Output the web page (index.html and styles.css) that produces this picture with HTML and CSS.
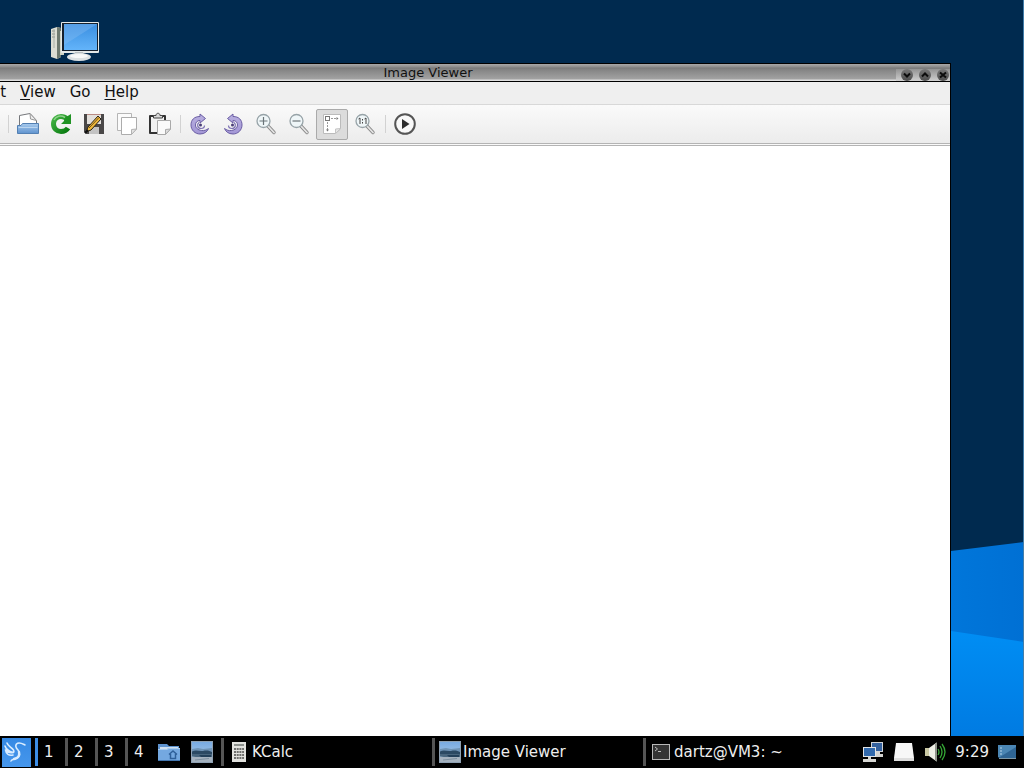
FILE: index.html
```html
<!DOCTYPE html>
<html lang="en">
<head>
    <meta charset="UTF-8">
    <meta name="viewport" content="width=device-width, initial-scale=1.0">
    <title>Image Viewer</title>
    <link rel="stylesheet" href="styles.css">
</head>
<body>
    <!-- Gradients and symbols shared by the icons -->
    <svg class="defs" aria-hidden="true">
        <defs>
            <linearGradient id="purple" x1="0" y1="0" x2="0" y2="1">
                <stop offset="0" stop-color="#b9b0e0"/>
                <stop offset="1" stop-color="#a397d6"/>
            </linearGradient>
            <linearGradient id="green" x1="0" y1="0" x2="1" y2="1">
                <stop offset="0" stop-color="#45b545"/>
                <stop offset="1" stop-color="#087a10"/>
            </linearGradient>
            <linearGradient id="tray" x1="0" y1="0" x2="0" y2="1">
                <stop offset="0" stop-color="#a9cbee"/>
                <stop offset="1" stop-color="#5f93ce"/>
            </linearGradient>
            <linearGradient id="screen" x1="0" y1="0" x2="0" y2="1">
                <stop offset="0" stop-color="#3a8ee0"/>
                <stop offset="1" stop-color="#63b4fa"/>
            </linearGradient>
            <linearGradient id="sky" x1="0" y1="0" x2="0" y2="1">
                <stop offset="0" stop-color="#78aae2"/>
                <stop offset="1" stop-color="#b4cfe6"/>
            </linearGradient>
            <linearGradient id="fold-top" x1="0" y1="0" x2="1" y2="0">
                <stop offset="0" stop-color="#007ee2"/>
                <stop offset="1" stop-color="#0070d4"/>
            </linearGradient>
            <linearGradient id="fold-bottom" x1="0" y1="0" x2="0" y2="1">
                <stop offset="0" stop-color="#0090f6"/>
                <stop offset="1" stop-color="#007be2"/>
            </linearGradient>
            <symbol id="rotate" viewBox="0 0 22 22">
                <path d="M11 3.500C5 3.500 2 7 2 12C2 17 6 21 11 21C15.500 21 18.500 18.500 19.500 15.500C17.500 17 15 18 12.500 17.500C9 17 6.500 15 6.500 12C6.500 9.500 8 7.500 11 7.500V10L16.500 5.500L11 1z" fill="url(#purple)" stroke="#6a5da3" stroke-linejoin="round"/>
                <path d="M10 9.500C7.500 11.500 8.500 15.500 12 15.500C14 15.500 15.500 14.500 15.500 12.500" fill="none" stroke="#7c70b4" stroke-width="1.200"/>
                <circle cx="11.500" cy="12" r="1.500" fill="#4a3f77"/>
            </symbol>
            <symbol id="lens" viewBox="0 0 22 22">
                <path d="M12.500 12.500L19 19.500" stroke="#8a8a8a" stroke-width="3.400" stroke-linecap="round"/>
                <path d="M13 13L19 19.500" stroke="#e5e5e5" stroke-width="1.800" stroke-linecap="round"/>
                <circle cx="8.500" cy="8" r="6.500" fill="#eff6f8" stroke="#97a3a8" stroke-width="1.300"/>
            </symbol>
            <symbol id="picture" viewBox="0 0 22 22">
                <rect width="22" height="22" fill="#8fa1b3"/>
                <rect x="1" y="1" width="20" height="20" fill="url(#sky)"/>
                <path d="M1 8L7 7L12 8L21 7V11H1z" fill="#6f93b5"/>
                <path d="M1 10.500C5 8.500 8 10.500 12 10C16 9 19 10 21 11V14H1z" fill="#2b4963"/>
                <path d="M1 13H21V16C14 15 10 17 1 15.500z" fill="#48657d"/>
                <path d="M8 14H20V16H10z" fill="#23405a"/>
                <path d="M1 16H21V21H1z" fill="#a5b2bf"/>
                <path d="M4 19L18 17.500" stroke="#7d909f"/>
            </symbol>
        </defs>
    </svg>

    <main class="desktop">
        <svg class="wallpaper" viewBox="0 0 1024 736" preserveAspectRatio="none" aria-hidden="true">
            <rect width="1024" height="736" fill="#002a4f"/>
            <path d="M860 563L951 551L1024 542V645H860z" fill="url(#fold-top)"/>
            <path d="M860 617L951 631L1024 642V736H860z" fill="url(#fold-bottom)"/>
            <rect x="1023" width="1" height="736" fill="#427da9"/>
        </svg>

        <button class="shortcut" type="button" aria-label="Computer">
            <svg width="50" height="42" viewBox="0 0 50 42">
                <path d="M1 8L7 6L11 7V36L7 38L1 36z" fill="#ddded4"/>
                <path d="M7 6L11 7V36L7 38z" fill="#6f7a70"/>
                <path d="M2 10H5M2 13H5M2 16H5" stroke="#8d9089"/>
                <path d="M4 8V27" stroke="#aab0a8"/>
                <path d="M10 10H14V34H10z" fill="#cfd3c4"/>
                <rect x="11" y="1" width="38" height="31" rx="1" fill="#e4e8e8"/>
                <rect x="12" y="2" width="36" height="28" fill="#16202c"/>
                <rect x="14" y="3" width="33" height="26" fill="url(#screen)"/>
                <path d="M14 3H47L14 24z" fill="#8dc1f4" opacity=".35"/>
                <path d="M25 31H33L34 35H24z" fill="#b9bfc2"/>
                <ellipse cx="29" cy="36" rx="12" ry="4" fill="#dce1e3"/>
                <ellipse cx="29" cy="35" rx="9" ry="2" fill="#f7f8f8"/>
            </svg>
        </button>

        <section class="window" aria-label="Image Viewer">
            <header class="titlebar">
                <h1 class="title">Image Viewer</h1>
                <div class="window-buttons">
                    <button type="button" aria-label="Minimize">
                        <svg width="12" height="12" viewBox="0 0 12 12"><path d="M3 4.500L6 7.500L9 4.500"/></svg>
                    </button>
                    <button type="button" aria-label="Maximize">
                        <svg width="12" height="12" viewBox="0 0 12 12"><path d="M3 7.500L6 4.500L9 7.500"/></svg>
                    </button>
                    <button type="button" aria-label="Close">
                        <svg width="12" height="12" viewBox="0 0 12 12"><path d="M3 3.500L9 8.500M9 3.500L3 8.500"/></svg>
                    </button>
                </div>
            </header>

            <nav class="menubar">
                <button type="button"><u>E</u>dit</button>
                <button type="button"><u>V</u>iew</button>
                <button type="button">Go</button>
                <button type="button"><u>H</u>elp</button>
            </nav>

            <div class="toolbar" role="toolbar">
                <span class="divider"></span>
                <button type="button" aria-label="Open file">
                    <svg width="24" height="24" viewBox="0 0 24 24">
                        <path d="M3.500 14V3.500L14 1.500L20.500 8.500V14" fill="#fff" stroke="#75777b"/>
                        <path d="M14 1.500L14.500 7L20.500 8.500z" fill="#ececec" stroke="#999"/>
                        <path d="M1.500 13.500H5L6.500 11.500H22.500V21.500H1.500z" fill="url(#tray)" stroke="#5380b3"/>
                        <path d="M2.500 15.500H21.500" stroke="#bcd6f0"/>
                    </svg>
                </button>
                <button type="button" aria-label="Reload">
                    <svg width="24" height="24" viewBox="0 0 24 24">
                        <path d="M19 16C17.500 18.500 15 19.500 12 19.500C8 19.500 4.500 16.500 4.500 12C4.500 7.500 8 4.500 12 4.500C14.500 4.500 16.500 5.500 18 7" fill="none" stroke="url(#green)" stroke-width="5"/>
                        <path d="M22 2V12H12L15 9L15.500 6z" fill="#209324"/>
                        <path d="M5 8C7 4 12 3 16 5.500" fill="none" stroke="#8fd28c" stroke-width="1.500"/>
                    </svg>
                </button>
                <button type="button" aria-label="Save">
                    <svg width="24" height="24" viewBox="0 0 24 24">
                        <path d="M2 2H22V22H4L2 20z" fill="#4a4848"/>
                        <rect x="5" y="2" width="14" height="10" fill="#e3e0dc"/>
                        <path d="M5 2.500H19" stroke="#b98b84"/>
                        <rect x="7" y="15" width="10" height="7" fill="#c3c3c3"/>
                        <path d="M4 20L6 15L16 4L19 7L9 18z" fill="#eeb93c" stroke="#27221a"/>
                        <path d="M7 16L17 5.500" stroke="#715018"/>
                        <path d="M3 21L6 18" stroke="#111" stroke-width="2"/>
                    </svg>
                </button>
                <button type="button" aria-label="Copy">
                    <svg width="24" height="24" viewBox="0 0 24 24">
                        <path d="M2.500 1.500H16.500V18.500H2.500z" fill="#fbfbfb" stroke="#b5b5b5"/>
                        <path d="M6.500 5.500H21.500V17L16.500 22.500H6.500z" fill="#fff" stroke="#acacac"/>
                        <path d="M16.500 22.500V17.500L21.500 17z" fill="#e3e3e3" stroke="#b3b3b3"/>
                    </svg>
                </button>
                <button type="button" aria-label="Paste">
                    <svg width="24" height="24" viewBox="0 0 24 24">
                        <rect x="1" y="3" width="17" height="19" rx="1" fill="#333"/>
                        <rect x="3" y="5" width="13" height="15" fill="#f1f1f1"/>
                        <path d="M5.500 6V3.500H8C8 .5 12 .5 12 3.500H14.500V6z" fill="#d9d9d9" stroke="#444"/>
                        <path d="M9.500 8.500H22.500V17L17.500 22.500H9.500z" fill="#fafafa" stroke="#a9a9a9"/>
                        <path d="M17.500 22.500V17.500L22.500 17z" fill="#ddd" stroke="#aaa"/>
                    </svg>
                </button>
                <span class="divider"></span>
                <button type="button" aria-label="Rotate left">
                    <svg width="22" height="22"><use href="#rotate"/></svg>
                </button>
                <button type="button" aria-label="Rotate right">
                    <svg width="22" height="22" viewBox="0 0 22 22"><g transform="translate(22 0) scale(-1 1)"><use href="#rotate" width="22" height="22"/></g></svg>
                </button>
                <button type="button" aria-label="Zoom in">
                    <svg width="22" height="22" viewBox="0 0 22 22">
                        <use href="#lens"/>
                        <path d="M4.500 8H12.500M8.500 4V12" stroke="#6a7478" stroke-width="1.200"/>
                    </svg>
                </button>
                <button type="button" aria-label="Zoom out">
                    <svg width="22" height="22" viewBox="0 0 22 22">
                        <use href="#lens"/>
                        <path d="M4.500 8H12.500" stroke="#6a7478" stroke-width="1.200"/>
                    </svg>
                </button>
                <button type="button" class="pressed" aria-label="Fit to window" aria-pressed="true">
                    <svg width="22" height="22" viewBox="0 0 22 22">
                        <path d="M2.500 1.500H19.500V16L14.500 20.500H2.500z" fill="#fff" stroke="#bbb"/>
                        <path d="M14.500 20.500V16L19.500 15.500z" fill="#e7e7e7" stroke="#c5c5c5"/>
                        <rect x="4.500" y="3.500" width="4" height="4" fill="#fff" stroke="#777"/>
                        <path d="M10 5.500H17M6.500 9V18" stroke="#999" stroke-dasharray="2 1"/>
                        <path d="M15.500 4L17.500 5.500L15.500 7zM5 16.500L6.500 18.500L8 16.500z" fill="#777"/>
                    </svg>
                </button>
                <button type="button" aria-label="Original size">
                    <svg width="22" height="22" viewBox="0 0 22 22">
                        <use href="#lens"/>
                        <path d="M4.500 6L6 5V11M10.500 6L12 5V11" fill="none" stroke="#444"/>
                        <path d="M8.500 6V7.500M8.500 9V10.500" stroke="#444"/>
                    </svg>
                </button>
                <span class="divider"></span>
                <button type="button" aria-label="Slide show">
                    <svg width="24" height="24" viewBox="0 0 24 24">
                        <circle cx="12" cy="12" r="9.800" fill="#f9f9f9" stroke="#555" stroke-width="2"/>
                        <path d="M9 7L16.500 12L9 17z" fill="#2d2d2d"/>
                    </svg>
                </button>
            </div>

            <div class="canvas"></div>
        </section>
    </main>

    <footer class="panel">
        <button class="start" type="button" aria-label="Application menu">
            <svg width="29" height="29" viewBox="0 0 29 29">
                <g fill="none" stroke="#d8ecff" stroke-width="1.600" stroke-linecap="round" stroke-linejoin="round">
                    <path d="M5 5C6 8 9 9 11.500 12C12 13 12 14 11 14.500"/>
                    <path d="M3 8C4 11 6 13 11 14.500C8 15 5 14 3.500 12C4 16 7 18 11 17"/>
                    <path d="M23 7C20 5.500 17 3.500 14.500 6C13 8 14 10 16 12C18.500 15 18 19 14 20.500C12 21.500 10 21 9 23"/>
                    <path d="M17 14C18 18 16 20 12 21" stroke-width="2.400"/>
                </g>
            </svg>
        </button>
        <nav class="pager" aria-label="Desktops">
            <button type="button" class="current">1</button>
            <button type="button">2</button>
            <button type="button">3</button>
            <button type="button">4</button>
        </nav>
        <div class="launchers">
            <button type="button" aria-label="File manager">
                <svg width="22" height="22" viewBox="0 0 22 22">
                    <path d="M0 3H9L11 5H21V12H0z" fill="#5e93cf"/>
                    <path d="M2 6H20V10H2z" fill="#cfe0f0"/>
                    <path d="M0 8H9L11 7H22V20H0z" fill="#74a8e0"/>
                    <path d="M0 8.500H9L11 7.500H22" fill="none" stroke="#a7cbef"/>
                    <path d="M11 13.500L15 10L19 13.500M12.500 13V17.500H17.500V13" fill="none" stroke="#2f609a" stroke-width="1.500"/>
                    <path d="M0 19.500H22" stroke="#4376b0"/>
                </svg>
            </button>
            <button type="button" aria-label="Image viewer launcher">
                <svg width="22" height="22"><use href="#picture"/></svg>
            </button>
        </div>
        <div class="tasks">
            <button type="button">
                <svg width="22" height="22" viewBox="0 0 22 22">
                    <rect x="4" y="1" width="14" height="20" fill="#e2e2de"/>
                    <rect x="6" y="3" width="10" height="2" fill="#8d918d"/>
                    <path d="M6 8H16M6 11H16M6 14H16M6 17H16" stroke="#4a4a48" stroke-width="1.500" stroke-dasharray="2 .7"/>
                </svg>
                <span>KCalc</span>
            </button>
            <button type="button">
                <svg width="22" height="22"><use href="#picture"/></svg>
                <span>Image Viewer</span>
            </button>
            <button type="button">
                <svg width="22" height="22" viewBox="0 0 22 22">
                    <rect x="2.500" y="3.500" width="17" height="15" fill="#343434" stroke="#b8b8b8"/>
                    <path d="M5 6L7.500 8L5 10M8 10.500H11" fill="none" stroke="#bbb"/>
                </svg>
                <span>dartz@VM3: ~</span>
            </button>
        </div>
        <div class="systray">
            <button type="button" aria-label="Network">
                <svg width="22" height="22" viewBox="0 0 22 22">
                    <rect x="9.500" y="1.500" width="11" height="9" fill="#35629f" stroke="#d2d5d8"/>
                    <path d="M14 11H18V13H21V16H12z" fill="#d4d4d2"/>
                    <rect x="1.500" y="6.500" width="12" height="9" fill="#3169ad" stroke="#e2e4e6"/>
                    <path d="M6 16H9V18H14V21H1V18H6z" fill="#d7d7d4"/>
                </svg>
            </button>
            <button type="button" aria-label="Removable media">
                <svg width="22" height="22" viewBox="0 0 22 22">
                    <path d="M3 2H19L21 17H1z" fill="#f7f7f7"/>
                    <path d="M1 17H21V20H1z" fill="#dedede"/>
                </svg>
            </button>
            <button type="button" aria-label="Volume">
                <svg width="22" height="22" viewBox="0 0 22 22">
                    <path d="M1 7H6V15H1z" fill="#c9c8a4"/>
                    <path d="M5 7L12 2V20L5 15z" fill="#eeefe6"/>
                    <path d="M11 3L13 1V21L11 19z" fill="#8f938b"/>
                    <path d="M14 8Q16 11 14 14M16 5Q20 11 16 17M18 3Q24 11 18 19" fill="none" stroke="#35a635" stroke-width="1.300"/>
                </svg>
            </button>
            <time class="clock">9:29</time>
            <button type="button" aria-label="Show desktop">
                <svg width="22" height="22" viewBox="0 0 22 22">
                    <path d="M2 4H20V18H4L2 16z" fill="#2f6594"/>
                    <path d="M2 4H20V6L4 16H2z" fill="#4b86b4"/>
                    <path d="M4 7H6M4 10H6M4 13H6" stroke="#b8d4e8"/>
                    <path d="M3 17.500H20" stroke="#7d98a8"/>
                </svg>
            </button>
        </div>
    </footer>
</body>
</html>
```
FILE: styles.css
```css
* {
    box-sizing: border-box;
}
body {
    display: flex;
    flex-direction: column;
    height: 100vh;
    margin: 0;
    overflow: hidden;
    font-family: "DejaVu Sans", sans-serif;
    font-size: 15px;
    background-color: #000;
}
button {
    margin: 0;
    padding: 0;
    border: 0;
    background: none;
    color: inherit;
    font: inherit;
}
svg {
    display: block;
    flex: none;
}
.defs {
    position: absolute;
    width: 0;
    height: 0;
}

/* Desktop */
.desktop {
    position: relative;
    flex: 1;
    min-height: 0;
    overflow: hidden;
}
.wallpaper {
    width: 100%;
    height: 100%;
}
.shortcut {
    position: absolute;
    left: 50px;
    top: 21px;
}

/* The window hangs over the left edge of the desktop */
.window {
    position: absolute;
    left: -94px;
    right: 73px;
    top: 63px;
    bottom: 0;
    display: flex;
    flex-direction: column;
    border-top: 1px solid #000;
    border-right: 1px solid #000;
    background-color: #fff;
}
.titlebar {
    display: grid;
    grid-template-columns: 1fr auto 1fr;
    align-items: center;
    height: 18px;
    border-bottom: 1px solid #000;
    background: linear-gradient(#a8a8a8 0, #8c8c8c 3px, #7a7a7a 4px, #858585 6px, #a2a2a2 15px, #dedede 16px);
}
.title {
    grid-column: 2;
    margin: 0;
    font-size: 13px;
    font-weight: normal;
    line-height: 16px;
    color: #111;
}
.window-buttons {
    display: flex;
    justify-self: end;
    align-self: end;
    gap: 6px;
    padding: 0 1px 0 5px;
    background: linear-gradient(#939393, #cfcfcf);
}
.window-buttons button {
    border-radius: 50%;
    background: linear-gradient(#777, #4d4d4d);
}
.window-buttons path {
    fill: none;
    stroke: #0c0c0c;
    stroke-width: 2;
}
.menubar {
    display: flex;
    gap: 14px;
    height: 23px;
    padding-left: 71px;
    border-bottom: 1px solid #d8d8d8;
    background-color: #efefef;
}
.menubar button {
    height: 20px;
    line-height: 20px;
    color: #111;
}
.menubar u {
    text-underline-offset: 2px;
}
.toolbar {
    display: flex;
    align-items: center;
    gap: 1px;
    height: 41px;
    padding-left: 99px;
    border-bottom: 3px double #b4b4b4;
    background: linear-gradient(#fafafa, #ececec);
}
.toolbar button {
    display: flex;
    align-items: center;
    justify-content: center;
    width: 32px;
    height: 31px;
    border: 1px solid transparent;
    border-radius: 2px;
}
.toolbar .pressed {
    border-color: #aaa;
    background-color: #dcdcdc;
}
.divider {
    width: 6px;
    height: 18px;
    background: linear-gradient(#d2d2d2, #d2d2d2) center / 1px 100% no-repeat;
}
.canvas {
    flex: 1;
}

/* Panel */
.panel {
    display: flex;
    align-items: center;
    height: 32px;
    padding: 0 6px 0 2px;
    background-color: #000;
    color: #eee;
}
.start {
    margin-right: 4px;
    background: linear-gradient(#3589e4, #4697ec);
}
.pager,
.launchers,
.tasks,
.systray {
    display: flex;
    align-items: center;
}
.pager button {
    width: 30px;
    height: 28px;
    padding-left: 6px;
    border-left: 3px solid #555;
    text-align: left;
}
.pager .current {
    border-left-color: #3d8ee6;
}
.launchers {
    gap: 11px;
    padding: 0 8px 0 3px;
}
.tasks {
    flex: 1;
    min-width: 0;
}
.tasks button {
    display: flex;
    align-items: center;
    flex: 0 1 211px;
    gap: 2px;
    height: 28px;
    padding-left: 4px;
    border-left: 3px solid #555;
    white-space: nowrap;
}
.systray {
    gap: 9px;
}
.clock {
    margin-right: -2px;
}
```
